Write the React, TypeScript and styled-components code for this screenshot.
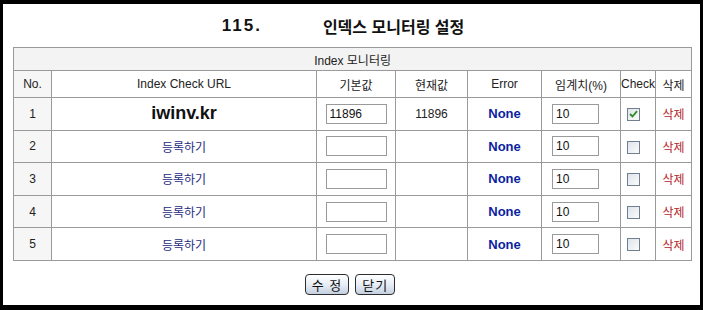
import React from 'react';
import styled, { createGlobalStyle } from 'styled-components';

const GlobalStyle = createGlobalStyle`
  html, body {
    margin: 0;
    padding: 0;
    background: #000;
  }
  body {
    font-family: 'Liberation Sans', 'Noto Sans CJK KR', sans-serif;
    font-size: 12px;
    color: #222;
  }
`;

const Frame = styled.div`
  width: 703px;
  height: 310px;
  box-sizing: border-box;
  border-style: solid;
  border-color: #000;
  border-width: 4px 3px 5px 3px;
  background: #fff;
  display: flex;
  flex-direction: column;
  padding: 0 9px 0 10px;
`;

const Title = styled.h1`
  margin: 0;
  height: 43px;
  display: flex;
  align-items: center;
  justify-content: center;
  gap: 61px;
  padding-right: 18px;
  font-family: 'Liberation Sans', 'Noto Sans CJK KR', sans-serif;
  font-size: 16px;
  font-weight: 600;
  color: #111;
`;

const Number = styled.span`
  font-size: 17px;
  font-weight: 700;
  letter-spacing: 2px;
`;

const Grid = styled.table`
  width: 678px;
  border-collapse: collapse;
  table-layout: fixed;
  border: 1px solid #9a9a9a;
`;

const Caption = styled.th`
  height: 22px;
  background: #f3f3f3;
  font-weight: 400;
  border: 1px solid #9a9a9a;
  padding: 0;
`;

const Head = styled.th<{ $shade?: boolean }>`
  height: 26px;
  font-weight: 400;
  border: 1px solid #9a9a9a;
  background: ${p => (p.$shade ? '#f6f6f6' : '#fff')};
  padding: 0;
  white-space: nowrap;
`;

const Cell = styled.td<{ $shade?: boolean }>`
  height: 31.6px;
  text-align: center;
  border: 1px solid #9a9a9a;
  background: ${p => (p.$shade ? '#f6f6f6' : '#fff')};
  padding: 0;
`;

const Domain = styled.span`
  font-size: 18px;
  font-weight: 700;
  color: #111;
`;

const Register = styled.span`
  color: #1d2a80;
`;

const ErrorText = styled.span`
  font-size: 13px;
  font-weight: 700;
  color: #0d1fa0;
`;

const Remove = styled.span`
  color: #b3262a;
`;

const Field = styled.input<{ $w: number; $left?: number }>`
  width: ${p => p.$w}px;
  height: 20px;
  box-sizing: border-box;
  border: 1px solid #9a9a9a;
  padding: 0 3px;
  font-family: 'Liberation Sans', sans-serif;
  font-size: 12px;
  color: #111;
  display: block;
  margin: ${p => (p.$left !== undefined ? `0 0 0 ${p.$left}px` : '0 auto')};
`;

const Box = styled.span`
  display: inline-flex;
  width: 13px;
  height: 13px;
  box-sizing: border-box;
  border: 1px solid #6f7f8f;
  background: linear-gradient(135deg, #dfe4ea, #fbfbfb);
  align-items: center;
  justify-content: center;
  vertical-align: middle;
  margin-right: 9px;
`;

const Actions = styled.div`
  display: flex;
  justify-content: center;
  gap: 6px;
  padding-top: 13px;
  padding-right: 4px;
`;

const Button = styled.button`
  height: 21px;
  padding: 0 6px;
  border: 1px solid #2d2d2d;
  border-radius: 4px;
  background: linear-gradient(#ffffff, #e8eef6 50%, #c4d0e0);
  font-family: 'Liberation Sans', 'Noto Sans CJK KR', sans-serif;
  font-size: 13px;
  color: #111;
  letter-spacing: 1px;
`;

const widths = [38, 265, 79, 72, 74, 79, 35, 36];

type Row = { no: number; domain?: string; base: string; current: string; checked: boolean };

const rows: Row[] = [
  { no: 1, domain: 'iwinv.kr', base: '11896', current: '11896', checked: true },
  { no: 2, base: '', current: '', checked: false },
  { no: 3, base: '', current: '', checked: false },
  { no: 4, base: '', current: '', checked: false },
  { no: 5, base: '', current: '', checked: false },
];

function Check({ on }: { on: boolean }) {
  return (
    <Box>
      {on && (
        <svg width="9" height="8" viewBox="0 0 9 8">
          <path d="M1 4 L3.5 6.5 L8 1.2" fill="none" stroke="#2f8a2a" strokeWidth="1.8" />
        </svg>
      )}
    </Box>
  );
}

export default function App() {
  return (
    <>
      <GlobalStyle />
      <Frame>
        <Title>
          <Number>115.</Number>
          <span>인덱스 모니터링 설정</span>
        </Title>
        <Grid>
          <colgroup>
            {widths.map((w, i) => (
              <col key={i} style={{ width: w }} />
            ))}
          </colgroup>
          <thead>
            <tr>
              <Caption colSpan={8}>Index 모니터링</Caption>
            </tr>
            <tr>
              <Head $shade>No.</Head>
              <Head>Index Check URL</Head>
              <Head>기본값</Head>
              <Head>현재값</Head>
              <Head>Error</Head>
              <Head>임계치(%)</Head>
              <Head>Check</Head>
              <Head>삭제</Head>
            </tr>
          </thead>
          <tbody>
            {rows.map(r => (
              <tr key={r.no}>
                <Cell $shade>{r.no}</Cell>
                <Cell>{r.domain ? <Domain>{r.domain}</Domain> : <Register>등록하기</Register>}</Cell>
                <Cell>
                  <Field $w={61} defaultValue={r.base} />
                </Cell>
                <Cell>{r.current}</Cell>
                <Cell>
                  <ErrorText>None</ErrorText>
                </Cell>
                <Cell>
                  <Field $w={47} $left={10} defaultValue="10" />
                </Cell>
                <Cell>
                  <Check on={r.checked} />
                </Cell>
                <Cell>
                  <Remove>삭제</Remove>
                </Cell>
              </tr>
            ))}
          </tbody>
        </Grid>
        <Actions>
          <Button>수 정</Button>
          <Button>닫기</Button>
        </Actions>
      </Frame>
    </>
  );
}
